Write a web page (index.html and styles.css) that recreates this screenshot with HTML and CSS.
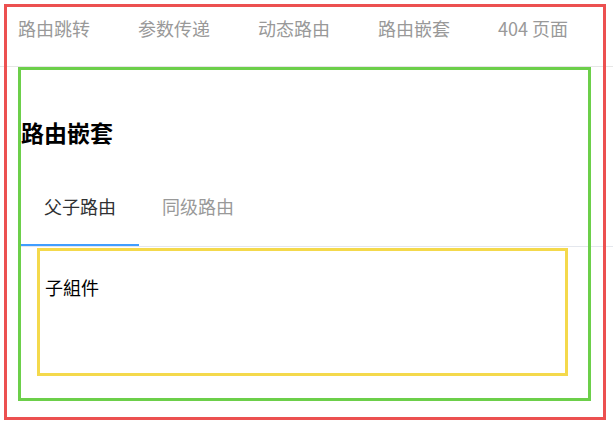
FILE: index.html
```html
<!DOCTYPE html>
<html lang="zh">
<head>
  <meta charset="UTF-8">
  <title>路由嵌套</title>
  <link rel="stylesheet" href="styles.css">
</head>
<body>

<div class="app">
  <nav class="nav">
    <a class="nav-link">路由跳转</a>
    <a class="nav-link">参数传递</a>
    <a class="nav-link">动态路由</a>
    <a class="nav-link">路由嵌套</a>
    <a class="nav-link">404 页面</a>
  </nav>

  <!-- 路由嵌套 page -->
  <div class="page">
    <h2 class="page-title">路由嵌套</h2>
    <div class="tabs">
      <a class="tab active">父子路由</a>
      <a class="tab">同级路由</a>
    </div>
    <div class="child">
      <p>子組件</p>
    </div>
  </div>
</div>

</body>
</html>
```

FILE: styles.css
```css
body {
  margin: 0;
  font-family: "Noto Sans CJK SC", "Noto Sans", sans-serif;
  color: #000;
  background: #fff;
}
.app {
  box-sizing: border-box;
  width: 602px;
  height: 416px;
  margin: 4px;
  border: 3px solid #ec5050;
  /* outline keeps the frame above the full-width lines */
  outline: 3px solid #ec5050;
  outline-offset: -3px;
}
.nav {
  display: flex;
  gap: 48px;
  height: 49px;
  margin: -7px -10px 0 -7px;
  padding: 17px 0 0 18px;
  border-bottom: 1px solid #e6e6e6;
}
.nav-link {
  width: 72px;
  font-size: 18px;
  line-height: 22px;
  color: #999;
  white-space: nowrap;
}
.page {
  box-sizing: border-box;
  width: 573px;
  height: 334px;
  margin-left: 11px;
  border: 3px solid #6ccf4a;
  outline: 3px solid #6ccf4a;
  outline-offset: -3px;
}
.page-title {
  margin: 46px 0 2px;
  font-size: 23px;
  line-height: 32px;
  font-weight: bold;
}
.tabs {
  display: flex;
  margin-right: -25px;
  border-bottom: 1px solid #e4e7ed;
}
.tab {
  padding: 45px 23px 27px;
  font-size: 18px;
  line-height: 22px;
  color: #999;
  border-bottom: 2px solid transparent;
}
.tab.active {
  color: #303133;
  border-bottom-color: #409eff;
}
.child {
  box-sizing: border-box;
  width: 531px;
  height: 128px;
  margin: 1px 0 0 16px;
  padding: 25px 5px;
  border: 3px solid #f4d94c;
}
.child p {
  margin: 0;
  font-size: 18px;
  line-height: 22px;
}
```
